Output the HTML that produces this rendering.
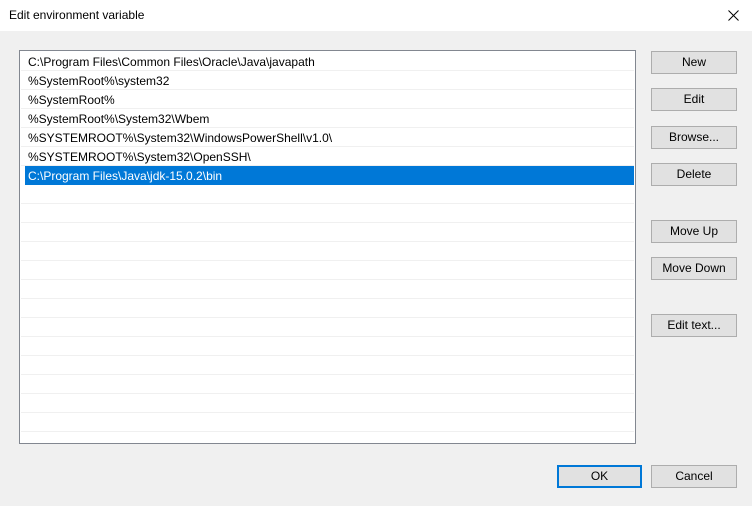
<!DOCTYPE html>
<html><head><style>
body{margin:0;width:752px;height:506px;background:#f0f0f0;font-family:"Liberation Sans",sans-serif;font-size:12px;color:#000;position:relative;overflow:hidden}
.title{position:absolute;left:0;top:0;width:752px;height:31px;background:#fff}
.title span{position:absolute;left:9px;top:8px;font-size:12px}
.x{position:absolute;left:728px;top:10px}
.list{position:absolute;left:19px;top:50px;width:615px;height:392px;background:#fff;border:1px solid #828790}
.row{position:absolute;left:1px;width:613px;height:19px;border-bottom:1px solid #f0f0f0;box-sizing:border-box}
.row span{position:absolute;left:7px;top:3px;white-space:nowrap}
.sel{background:#0078d7;color:#fff;left:5px;width:609px;border-bottom:none}
.sel span{left:3px}
.btn{position:absolute;left:651px;width:84px;height:21px;background:#e1e1e1;border:1px solid #adadad;text-align:center;line-height:21px}
.ok{left:557px;width:81px;height:19px;border:2px solid #0078d7;line-height:19px}
</style></head><body>
<div class="title"><span>Edit environment variable</span><svg class="x" width="11" height="11" viewBox="0 0 11 11"><path d="M0.5 0.5L10.5 10.5M10.5 0.5L0.5 10.5" stroke="#000" stroke-width="1" fill="none"/></svg></div>
<div class="list">
<div class="row" style="top:1px"><span>C:\Program Files\Common Files\Oracle\Java\javapath</span></div>
<div class="row" style="top:20px"><span>%SystemRoot%\system32</span></div>
<div class="row" style="top:39px"><span>%SystemRoot%</span></div>
<div class="row" style="top:58px"><span>%SystemRoot%\System32\Wbem</span></div>
<div class="row" style="top:77px"><span>%SYSTEMROOT%\System32\WindowsPowerShell\v1.0\</span></div>
<div class="row" style="top:96px"><span>%SYSTEMROOT%\System32\OpenSSH\</span></div>
<div class="row sel" style="top:115px"><span>C:\Program Files\Java\jdk-15.0.2\bin</span></div>
<div class="row" style="top:134px"></div>
<div class="row" style="top:153px"></div>
<div class="row" style="top:172px"></div>
<div class="row" style="top:191px"></div>
<div class="row" style="top:210px"></div>
<div class="row" style="top:229px"></div>
<div class="row" style="top:248px"></div>
<div class="row" style="top:267px"></div>
<div class="row" style="top:286px"></div>
<div class="row" style="top:305px"></div>
<div class="row" style="top:324px"></div>
<div class="row" style="top:343px"></div>
<div class="row" style="top:362px"></div>
</div>
<div class="btn" style="top:51px">New</div>
<div class="btn" style="top:88px">Edit</div>
<div class="btn" style="top:126px">Browse...</div>
<div class="btn" style="top:163px">Delete</div>
<div class="btn" style="top:220px">Move Up</div>
<div class="btn" style="top:257px">Move Down</div>
<div class="btn" style="top:314px">Edit text...</div>
<div class="btn ok" style="top:465px">OK</div>
<div class="btn" style="top:465px">Cancel</div>
</body></html>
